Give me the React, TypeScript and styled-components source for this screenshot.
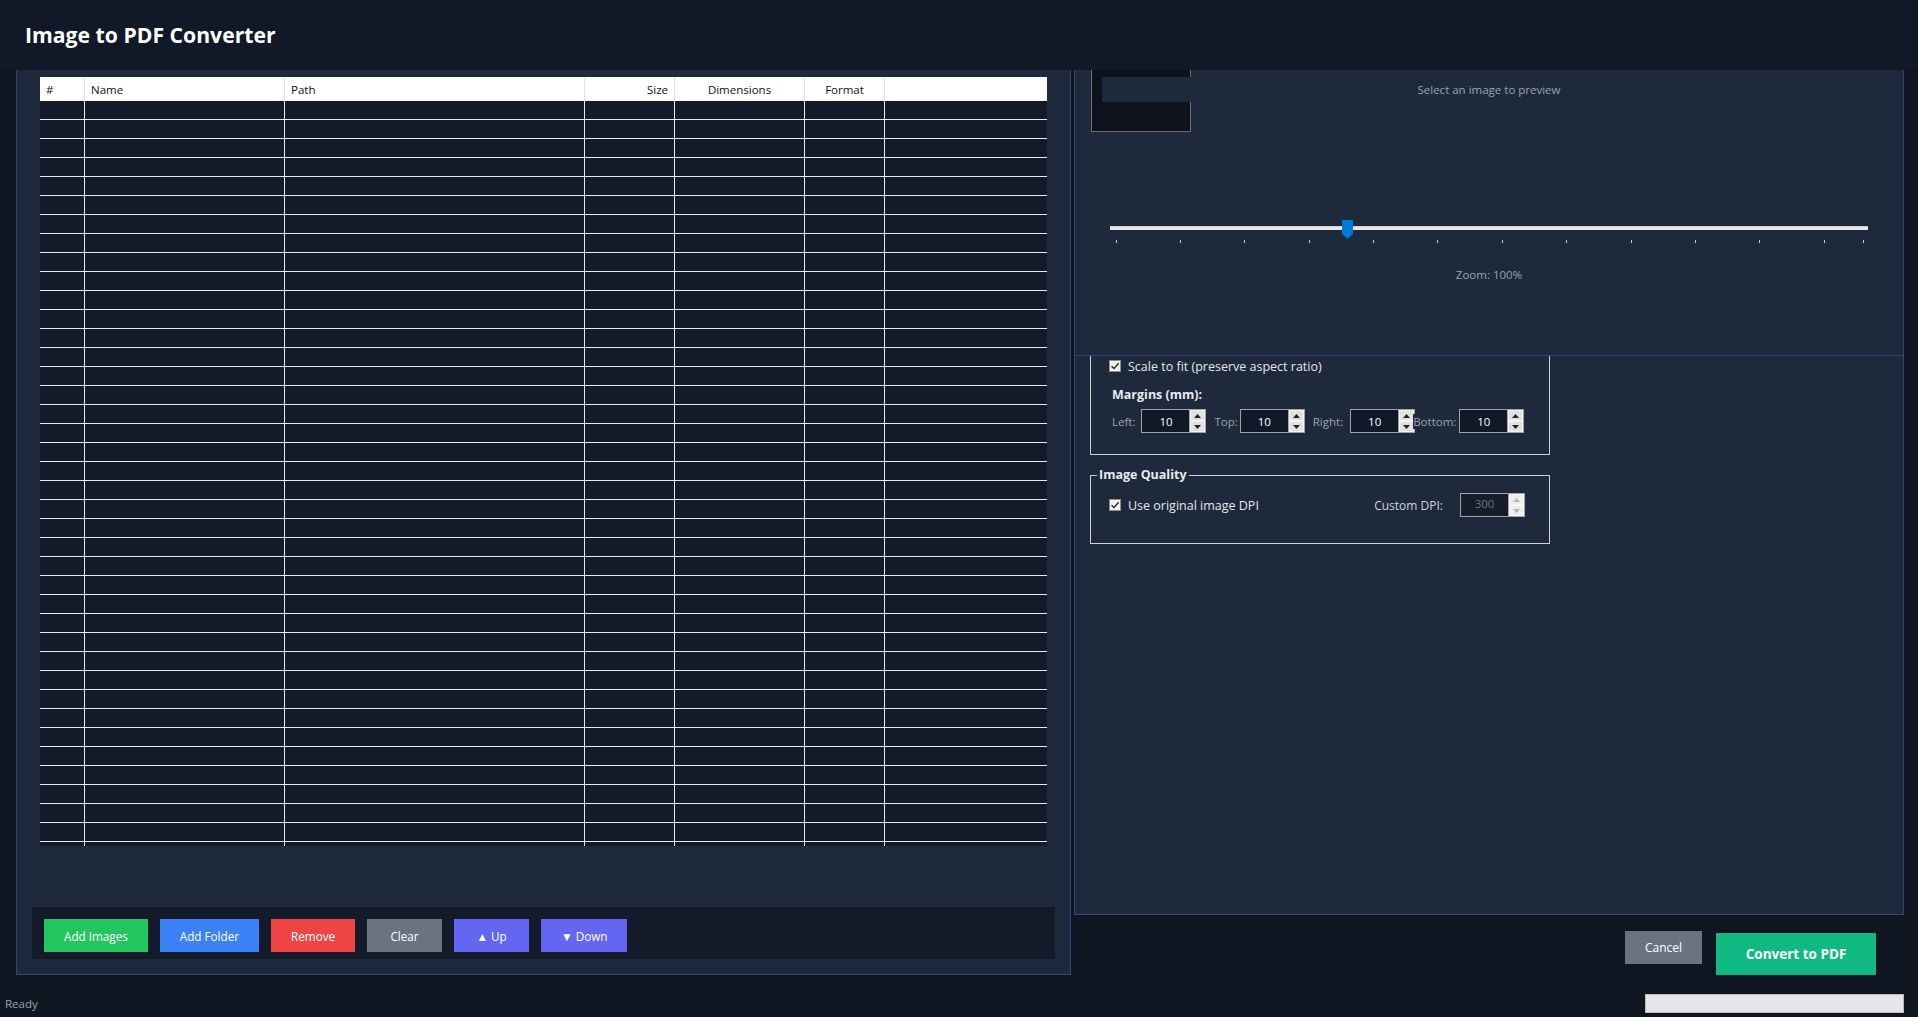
import React from "react";
import styled, { createGlobalStyle, css } from "styled-components";

const GlobalStyle = createGlobalStyle`
  html, body { margin: 0; padding: 0; }
  body {
    background: #0f1521;
    font-family: "Open Sans", "Noto Sans", sans-serif;
    overflow: hidden;
  }
  * { box-sizing: border-box; }
`;

const UI_FONT = `"Open Sans", "Noto Sans", sans-serif`;

const Page = styled.div`
  width: 1918px;
  height: 1017px;
  display: flex;
  flex-direction: column;
  background: #0f1521;
  overflow: hidden;
`;

const Header = styled.header`
  height: 70px;
  flex: none;
  background: #111827;
  display: flex;
  align-items: center;
  padding-left: 25px;
`;

const Title = styled.h1`
  margin: 0;
  font-family: ${UI_FONT};
  font-weight: 700;
  font-size: 21.2px;
  line-height: 1;
  color: #ffffff;
`;

const Main = styled.main`
  height: 905px;
  flex: none;
  display: flex;
  gap: 3px;
  padding: 0 14px 0 16px;
`;

const LeftPanel = styled.section`
  width: 1055px;
  height: 905px;
  flex: none;
  background: #1e293b;
  border: 1px solid #34437a;
  border-top: none;
  padding: 7px 15px 15px;
  display: flex;
  flex-direction: column;
  justify-content: space-between;
`;

const TableFrame = styled.div`
  margin: 0 8px;
  height: 769px;
  overflow: hidden;
  background: #131a29;
`;

const GRID = "45px 200px 300px 90px 130px 80px 1fr";

const HeaderRow = styled.div`
  display: grid;
  grid-template-columns: ${GRID};
  height: 24px;
  background: #ffffff;
`;

const HeaderCell = styled.div<{ $align?: "left" | "right" | "center"; $last?: boolean }>`
  display: flex;
  align-items: center;
  justify-content: ${(p) =>
    p.$align === "right" ? "flex-end" : p.$align === "center" ? "center" : "flex-start"};
  padding: 0 6px 0 6px;
  font-family: ${UI_FONT};
  font-size: 11.5px;
  color: #111111;
  border-right: ${(p) => (p.$last ? "none" : "1px solid #e1e1e1")};
  white-space: nowrap;
`;

const BodyRow = styled.div`
  display: grid;
  grid-template-columns: ${GRID};
  height: 19px;
  border-bottom: 1px solid #e8eaee;
`;

const BodyCell = styled.div<{ $last?: boolean }>`
  border-right: ${(p) => (p.$last ? "none" : "1px solid #e8eaee")};
`;

const ButtonBar = styled.div`
  height: 52px;
  background: #131b2a;
  padding: 12px;
  display: flex;
  align-items: flex-start;
  gap: 12px;
`;

type Variant = "green" | "blue" | "red" | "gray" | "indigo" | "emerald";
const COLORS: Record<Variant, string> = {
  green: "#22c55e",
  blue: "#3b82f6",
  red: "#ef4444",
  gray: "#6b7280",
  indigo: "#6366f1",
  emerald: "#10b981",
};

const ToolButton = styled.button<{ $variant: Variant }>`
  height: 33px;
  min-width: 75px;
  padding: 0 20px;
  border: none;
  border-radius: 0;
  background: ${(p) => COLORS[p.$variant]};
  color: #ffffff;
  font-family: ${UI_FONT};
  font-size: 11.7px;
  white-space: nowrap;
  cursor: pointer;
`;

const RightColumn = styled.div`
  flex: 1;
  display: flex;
  flex-direction: column;
`;

const RightPanel = styled.section`
  height: 845px;
  flex: none;
  background: #1e293b;
  border: 1px solid #34437a;
  border-top: none;
  display: flex;
  flex-direction: column;
`;

const PreviewSection = styled.div`
  position: relative;
  height: 286px;
  flex: none;
  border-bottom: 1px solid #34437a;
  display: flex;
  flex-direction: column;
`;

const PreviewBox = styled.div`
  width: 100px;
  height: 62px;
  margin-left: 16px;
  background: #0e121b;
  border: 1px solid #6d6d6d;
  border-top: none;
`;

const PreviewLabel = styled.div`
  position: absolute;
  top: 7px;
  left: 27px;
  right: 27px;
  height: 25px;
  background: #1e293b;
  display: flex;
  align-items: center;
  justify-content: center;
  font-family: ${UI_FONT};
  font-size: 11.5px;
  color: #9ca3af;
`;

const SliderWrap = styled.div`
  position: relative;
  height: 24px;
  margin: 88px 35px 0;
`;

const Track = styled.div`
  margin-top: 6px;
  height: 4px;
  background: #e7e7e7;
  box-shadow: inset 0 1px 0 #cfcfcf;
`;

const HandleSvg = styled.svg`
  position: absolute;
  top: 0;
`;

const TickSvg = styled.svg`
  display: block;
  margin-top: 10px;
`;

const ZoomLabel = styled.div`
  margin-top: 23px;
  line-height: 16px;
  text-align: center;
  font-family: ${UI_FONT};
  font-size: 11.5px;
  color: #9ca3af;
`;

const SettingsSection = styled.div`
  padding-left: 15px;
  display: flex;
  flex-direction: column;
`;

const LayoutGroup = styled.div`
  width: 460px;
  height: 99px;
  border: 1px solid #cdd0d5;
  border-top: none;
  padding-left: 18px;
  display: flex;
  flex-direction: column;
`;

const QualityGroup = styled.fieldset`
  width: 460px;
  margin: 12px 0 0;
  padding: 10px 24px 26px 18px;
  border: 1px solid #cdd0d5;
  min-width: 0;
`;

const GroupLegend = styled.legend`
  margin-left: -12px;
  padding: 0 2px;
  font-family: ${UI_FONT};
  font-size: 12.5px;
  font-weight: 700;
  line-height: 16px;
  color: #e8ebf0;
`;

const CheckRow = styled.label`
  display: flex;
  align-items: center;
  height: 20px;
  gap: 7px;
  font-family: ${UI_FONT};
  font-size: 12.5px;
  color: #e5e7eb;
`;

const CheckBox = styled.span`
  width: 12px;
  height: 12px;
  flex: none;
  background: #f2f2f2;
  border: 1px solid #8e8e8e;
  display: flex;
  align-items: center;
  justify-content: center;
`;

const SubTitle = styled.div`
  margin-top: 9px;
  padding-left: 3px;
  line-height: 20px;
  font-family: ${UI_FONT};
  font-size: 12.5px;
  font-weight: 700;
  color: #e8ebf0;
`;

const SpinRow = styled.div`
  margin-top: 4px;
  padding-left: 3px;
  display: flex;
  align-items: center;
  height: 24px;
`;

const FieldLabel = styled.span<{ $light?: boolean; $pull?: number; $gap?: number }>`
  position: relative;
  font-family: ${UI_FONT};
  font-size: ${(p) => (p.$light ? "12px" : "11.5px")};
  color: ${(p) => (p.$light ? "#d1d5db" : "#9ca3af")};
  margin-left: ${(p) => (p.$pull ? -p.$pull : 0)}px;
  margin-right: ${(p) => p.$gap ?? 5}px;
  background: #1e293b;
  white-space: nowrap;
`;

const SpinBox = styled.div<{ $gapAfter?: number }>`
  width: 65px;
  height: 24px;
  flex: none;
  display: flex;
  border: 1px solid #a3a3a3;
  margin-right: ${(p) => p.$gapAfter ?? 0}px;
`;

const SpinValue = styled.div<{ $disabled?: boolean }>`
  flex: 1;
  display: flex;
  align-items: center;
  justify-content: center;
  background: ${(p) => (p.$disabled ? "#161d2b" : "#111827")};
  color: ${(p) => (p.$disabled ? "#6b7280" : "#ffffff")};
  font-family: ${UI_FONT};
  font-size: 11.5px;
  ${(p) =>
    p.$disabled &&
    css`
      align-items: flex-start;
      padding-top: 2px;
    `}
`;

const SpinButtons = styled.div`
  width: 16px;
  display: flex;
  flex-direction: column;
  border-left: 1px solid #a3a3a3;
`;

const SpinButton = styled.div<{ $disabled?: boolean }>`
  flex: 1;
  display: flex;
  align-items: center;
  justify-content: center;
  background: ${(p) => (p.$disabled ? "#eeeeee" : "#e1e1e1")};
  border: 1px solid ${(p) => (p.$disabled ? "#f7f7f7" : "#f4f4f4")};
`;

const QualityRow = styled.div`
  display: flex;
  align-items: center;
  height: 24px;
`;

const Spacer = styled.div`
  flex: 1;
`;

const ActionRow = styled.div`
  display: flex;
  justify-content: flex-end;
  align-items: flex-start;
  gap: 14px;
  padding-right: 28px;
`;

const CancelButton = styled(ToolButton)`
  margin-top: 16px;
  width: 77px;
  font-size: 12px;
`;

const ConvertButton = styled(ToolButton)`
  margin-top: 18px;
  width: 160px;
  height: 42px;
  font-size: 13.5px;
  font-weight: 700;
`;

const StatusBar = styled.footer`
  height: 42px;
  flex: none;
  display: flex;
  align-items: center;
  justify-content: space-between;
  padding: 19px 14px 4px 5px;
`;

const StatusText = styled.span`
  font-family: ${UI_FONT};
  font-size: 11.5px;
  color: #9ca3af;
`;

const ProgressTrack = styled.div`
  width: 259px;
  height: 19px;
  background: #e6e6e6;
  border: 1px solid #bcbcbc;
`;

const Arrow = ({ dir, color }: { dir: "up" | "down"; color: string }) => (
  <svg width="7" height="4" viewBox="0 0 7 4">
    {dir === "up" ? (
      <path d="M0 4 L3.5 0 L7 4 Z" fill={color} />
    ) : (
      <path d="M0 0 L7 0 L3.5 4 Z" fill={color} />
    )}
  </svg>
);

const Spin = ({
  value,
  disabled,
  gapAfter,
}: {
  value: string;
  disabled?: boolean;
  gapAfter?: number;
}) => (
  <SpinBox $gapAfter={gapAfter}>
    <SpinValue $disabled={disabled}>{value}</SpinValue>
    <SpinButtons>
      <SpinButton $disabled={disabled}>
        <Arrow dir="up" color={disabled ? "#b5b5b5" : "#222"} />
      </SpinButton>
      <SpinButton $disabled={disabled}>
        <Arrow dir="down" color={disabled ? "#b5b5b5" : "#222"} />
      </SpinButton>
    </SpinButtons>
  </SpinBox>
);

const Check = ({ label }: { label: string }) => (
  <CheckRow>
    <CheckBox>
      <svg width="10" height="10" viewBox="0 0 10 10">
        <path d="M1.5 5.2 L4 7.6 L8.6 2.2" fill="none" stroke="#222" strokeWidth="1.4" />
      </svg>
    </CheckBox>
    {label}
  </CheckRow>
);

const columns: { label: string; align?: "left" | "right" | "center" }[] = [
  { label: "#" },
  { label: "Name" },
  { label: "Path" },
  { label: "Size", align: "right" },
  { label: "Dimensions", align: "center" },
  { label: "Format", align: "center" },
  { label: "" },
];

const ROWS = 40;

// Slider: range 10..300, value 100, tick interval 25
const TRACK_W = 758;
const HANDLE_W = 11;
const SPAN = TRACK_W - HANDLE_W;
const MIN = 10;
const MAX = 300;
const VALUE = 100;
const ticks: number[] = [];
for (let v = MIN; v < MAX; v += 25) ticks.push(v);
ticks.push(MAX);
const posOf = (v: number) => ((v - MIN) / (MAX - MIN)) * SPAN;

export default function App() {
  return (
    <>
      <GlobalStyle />
      <Page>
        <Header>
          <Title>Image to PDF Converter</Title>
        </Header>
        <Main>
          <LeftPanel>
            <TableFrame>
              <HeaderRow>
                {columns.map((c, i) => (
                  <HeaderCell key={i} $align={c.align} $last={i === columns.length - 1}>
                    {c.label}
                  </HeaderCell>
                ))}
              </HeaderRow>
              {Array.from({ length: ROWS }).map((_, r) => (
                <BodyRow key={r}>
                  {columns.map((_, i) => (
                    <BodyCell key={i} $last={i === columns.length - 1} />
                  ))}
                </BodyRow>
              ))}
            </TableFrame>
            <ButtonBar>
              <ToolButton $variant="green">Add Images</ToolButton>
              <ToolButton $variant="blue">Add Folder</ToolButton>
              <ToolButton $variant="red">Remove</ToolButton>
              <ToolButton $variant="gray">Clear</ToolButton>
              <ToolButton $variant="indigo">▲ Up</ToolButton>
              <ToolButton $variant="indigo">▼ Down</ToolButton>
            </ButtonBar>
          </LeftPanel>
          <RightColumn>
            <RightPanel>
              <PreviewSection>
                <PreviewBox />
                <PreviewLabel>Select an image to preview</PreviewLabel>
                <SliderWrap>
                  <Track />
                  <HandleSvg
                    width={HANDLE_W}
                    height="19"
                    viewBox="0 0 11 19"
                    style={{ left: posOf(VALUE) }}
                  >
                    <path d="M0 0 H11 V14 L5.5 19 L0 14 Z" fill="#0078d7" />
                  </HandleSvg>
                  <TickSvg width={TRACK_W} height="3" viewBox={`0 0 ${TRACK_W} 3`}>
                    {ticks.map((v) => {
                      const x = Math.round(posOf(v) + HANDLE_W / 2) + 0.5;
                      return <line key={v} x1={x} x2={x} y1="0" y2="3" stroke="#c9cdd3" strokeWidth="1" />;
                    })}
                  </TickSvg>
                </SliderWrap>
                <ZoomLabel>Zoom: 100%</ZoomLabel>
              </PreviewSection>
              <SettingsSection>
                <LayoutGroup>
                  <Check label="Scale to fit (preserve aspect ratio)" />
                  <SubTitle>Margins (mm):</SubTitle>
                  <SpinRow>
                    <FieldLabel $gap={6}>Left:</FieldLabel>
                    <Spin value="10" gapAfter={8} />
                    <FieldLabel $gap={2}>Top:</FieldLabel>
                    <Spin value="10" gapAfter={8} />
                    <FieldLabel $gap={7}>Right:</FieldLabel>
                    <Spin value="10" />
                    <FieldLabel $pull={2} $gap={3}>Bottom:</FieldLabel>
                    <Spin value="10" />
                  </SpinRow>
                </LayoutGroup>
                <QualityGroup>
                  <GroupLegend>Image Quality</GroupLegend>
                  <QualityRow>
                    <Check label="Use original image DPI" />
                    <Spacer />
                    <FieldLabel $light $gap={17}>Custom DPI:</FieldLabel>
                    <Spin value="300" disabled />
                  </QualityRow>
                </QualityGroup>
              </SettingsSection>
            </RightPanel>
            <ActionRow>
              <CancelButton $variant="gray">Cancel</CancelButton>
              <ConvertButton $variant="emerald">Convert to PDF</ConvertButton>
            </ActionRow>
          </RightColumn>
        </Main>
        <StatusBar>
          <StatusText>Ready</StatusText>
          <ProgressTrack />
        </StatusBar>
      </Page>
    </>
  );
}
